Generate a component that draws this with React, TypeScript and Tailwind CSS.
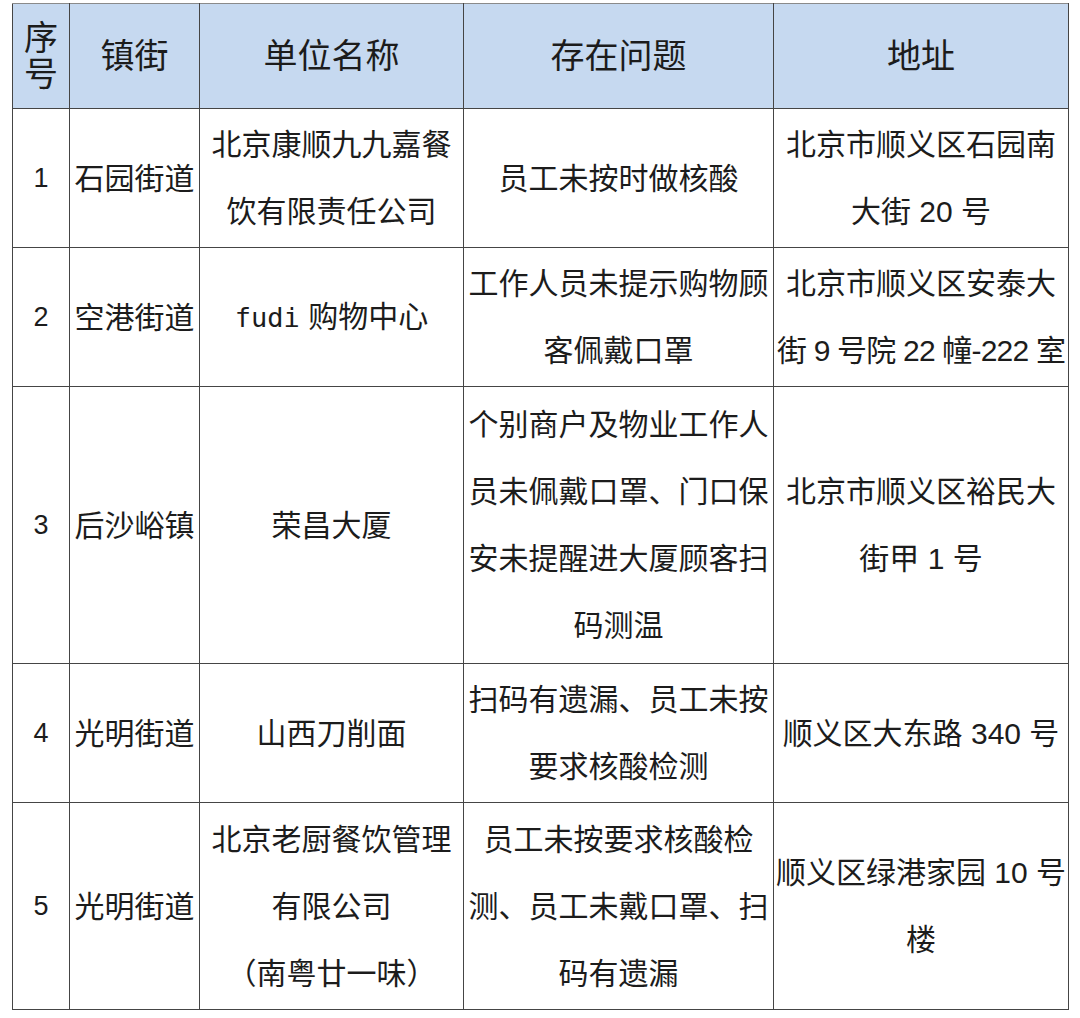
const FONT = "font-['Liberation_Sans','Noto_Sans_CJK_SC',sans-serif]";

interface Row {
  no: string;
  town: string;
  unit: React.ReactNode[];
  issue: string[];
  addr: React.ReactNode[];
  h: string;
}

const ROWS: Row[] = [
  {
    no: "1",
    town: "石园街道",
    unit: ["北京康顺九九嘉餐", "饮有限责任公司"],
    issue: ["员工未按时做核酸"],
    addr: ["北京市顺义区石园南", "大街 20 号"],
    h: "h-[139px]",
  },
  {
    no: "2",
    town: "空港街道",
    unit: [
      <>
        <span className="font-['DejaVu_Sans_Mono',monospace] text-[27px]">fudi</span> 购物中心
      </>,
    ],
    issue: ["工作人员未提示购物顾", "客佩戴口罩"],
    addr: ["北京市顺义区安泰大", <span className="tracking-[-0.8px]">街 9 号院 22 幢-222 室</span>],
    h: "h-[139px]",
  },
  {
    no: "3",
    town: "后沙峪镇",
    unit: ["荣昌大厦"],
    issue: ["个别商户及物业工作人", "员未佩戴口罩、门口保", "安未提醒进大厦顾客扫", "码测温"],
    addr: ["北京市顺义区裕民大", "街甲 1 号"],
    h: "h-[277px]",
  },
  {
    no: "4",
    town: "光明街道",
    unit: ["山西刀削面"],
    issue: ["扫码有遗漏、员工未按", "要求核酸检测"],
    addr: ["顺义区大东路 340 号"],
    h: "h-[139px]",
  },
  {
    no: "5",
    town: "光明街道",
    unit: ["北京老厨餐饮管理", "有限公司", "（南粤廿一味）"],
    issue: ["员工未按要求核酸检", "测、员工未戴口罩、扫", "码有遗漏"],
    addr: ["顺义区绿港家园 10 号", "楼"],
    h: "h-[207px]",
  },
];

function Lines({ items }: { items: React.ReactNode[] }) {
  return (
    <>
      {items.map((t, i) => (
        <div key={i} className="whitespace-nowrap">
          {t}
        </div>
      ))}
    </>
  );
}

export default function App() {
  const cell = "border-[1.5px] border-[#454545] text-center align-middle p-0 overflow-visible";
  return (
    <div className={`w-[1080px] h-[1018px] bg-white pt-[3px] pl-[12px] ${FONT} text-[#1c1c1c]`}>
      <table className="border-collapse table-fixed w-[1056px]">
        <colgroup>
          <col className="w-[57px]" />
          <col className="w-[130px]" />
          <col className="w-[264px]" />
          <col className="w-[310px]" />
          <col className="w-[295px]" />
        </colgroup>
        <thead>
          <tr className="h-[105px] bg-[#c6d9f0] text-[34px]">
            <th className={`${cell} font-normal leading-[36px] border-t-[#8a8a8a]`}>
              序<br />号
            </th>
            <th className={`${cell} font-normal border-t-[#8a8a8a]`}>镇街</th>
            <th className={`${cell} font-normal border-t-[#8a8a8a]`}>单位名称</th>
            <th className={`${cell} font-normal border-t-[#8a8a8a]`}>存在问题</th>
            <th className={`${cell} font-normal border-t-[#8a8a8a]`}>地址</th>
          </tr>
        </thead>
        <tbody className="text-[30px] leading-[67px]">
          {ROWS.map((r) => (
            <tr key={r.no} className={r.h}>
              <td className={`${cell} text-[27px]`}>{r.no}</td>
              <td className={cell}>{r.town}</td>
              <td className={cell}>
                <Lines items={r.unit} />
              </td>
              <td className={cell}>
                <Lines items={r.issue} />
              </td>
              <td className={cell}>
                <Lines items={r.addr} />
              </td>
            </tr>
          ))}
        </tbody>
      </table>
    </div>
  );
}
